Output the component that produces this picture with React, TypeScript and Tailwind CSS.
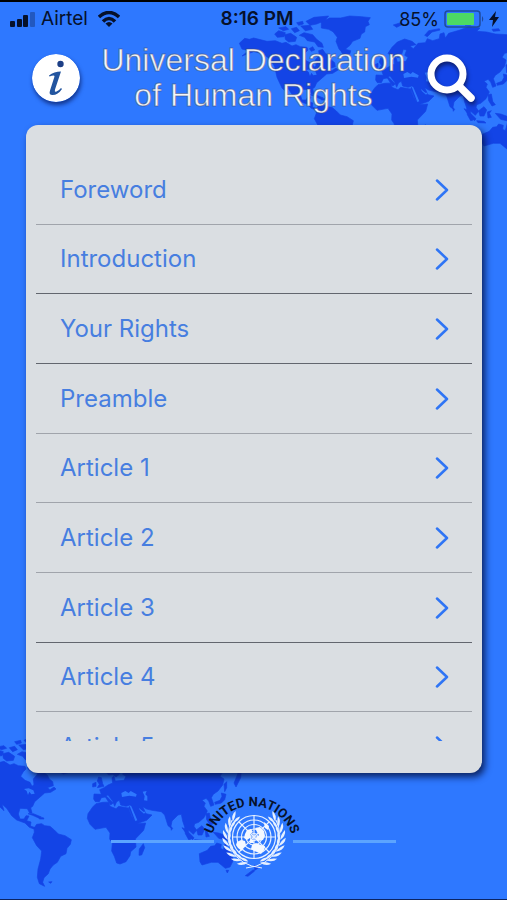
import React from 'react';

interface Section {
    title: string;
    dark?: boolean;
}

const SECTIONS: Section[] = [
    { title: 'Foreword' },
    { title: 'Introduction', dark: true },
    { title: 'Your Rights', dark: true },
    { title: 'Preamble' },
    { title: 'Article 1' },
    { title: 'Article 2' },
    { title: 'Article 3', dark: true },
    { title: 'Article 4' },
    { title: 'Article 5' },
];

const LAND = [
    // North America
    'M-128 130L-112 115L-98 118L-85 114L-45 124L-20 122L0 130L12 127L30 138L42 134L55 140L75 142L78 150L70 158L62 172L75 184L90 190L96 202L102 197L100 180L112 166L110 152L122 148L130 160L142 168L148 180L158 188L160 200L142 206L150 212L162 204L168 210L152 220L134 222L118 236L104 248L98 262L92 266L96 282L89 282L82 269L60 268L55 285L60 300L72 300L78 290L87 291L80 305L93 309L91 321L106 326L102 330L88 325L75 312L50 303L35 290L20 268L6 255L12 275L0 264L-15 232L-22 200L-35 178L-60 160L-85 155L-120 168L-100 152L-120 147Z',
    // Canadian arctic islands
    'M-22 102L-10 92L10 98L6 110L-14 112Z',
    'M8 104L26 100L44 112L40 124L20 126L10 118Z',
    'M-10 84L12 80L20 88L4 92Z',
    'M28 86L44 82L52 92L38 98Z',
    'M52 106L66 98L92 104L104 118L120 130L124 142L108 140L98 126L76 122L68 112Z',
    'M56 78L84 76L92 88L70 92Z',
    'M72 64L96 52L140 48L128 62L104 72L84 76Z',
    'M44 68L62 64L64 72L50 76Z',
    'M82 146L92 140L98 150L88 154Z',
    // Greenland, Iceland
    'M118 66L143 54L176 54L203 48L238 50L265 53L258 64L262 74L250 80L248 96L238 102L234 115L212 124L204 136L193 145L181 158L171 147L162 124L166 112L153 95L140 88L118 84Z',
    'M178 152L190 148L206 152L204 161L190 165L180 160Z',
    // Caribbean
    'M84 284L100 284L124 294L116 297L98 289Z',
    'M118 296L130 296L132 300L118 300Z',
    // South America
    'M110 316L125 314L134 320L150 322L163 333L175 345L195 350L214 362L211 376L201 388L198 404L182 412L172 430L160 438L150 450L145 464L132 476L128 490L134 502L118 494L112 475L114 450L122 420L125 396L110 380L97 356L103 340L102 328Z',
    'M146 489L156 488L152 493Z',
    // Africa
    'M288 254L308 250L326 249L330 262L348 269L356 262L385 267L395 292L410 314L437 312L431 334L406 360L408 384L392 398L390 410L378 428L360 435L350 432L343 412L335 396L337 372L329 360L330 342L318 325L285 331L270 316L262 298L264 284L278 264Z',
    'M430 374L434 386L425 408L417 409L418 390Z',
    // Eurasia
    'M282 225L304 226L299 212L312 206L324 198L338 192L336 176L342 172L346 186L372 184L378 172L368 166L374 150L364 148L358 166L348 174L338 166L326 168L318 160L330 142L346 126L368 117L390 124L402 134L384 138L394 146L408 130L430 128L436 116L452 122L472 116L474 102L486 98L490 114L500 100L534 90L560 80L594 84L584 94L614 96L640 102L676 104L706 110L740 114L762 124L758 136L742 136L746 148L724 156L722 176L708 204L702 192L712 168L716 156L690 154L668 160L660 172L672 180L668 198L654 216L640 226L634 236L642 258L632 262L626 246L618 238L606 244L616 252L612 262L622 276L612 296L596 310L584 314L582 322L590 334L580 346L566 334L562 348L574 360L566 362L556 344L554 324L548 306L544 286L534 288L516 306L512 326L504 320L494 288L484 278L456 274L440 270L428 263L438 284L456 288L440 304L410 314L398 294L386 266L392 258L378 262L362 258L358 244L350 248L344 262L338 246L324 228L318 230L334 246L340 252L332 258L316 234L304 236L298 248L286 248L281 240Z',
    // Nordic and Siberian islands
    'M334 75L356 68L360 74L344 82Z',
    'M428 106L440 92L472 86L474 90L450 96L436 110Z',
    'M544 70L560 66L566 76L550 76Z',
    'M630 88L650 86L654 92L634 94Z',
    // British Isles
    'M292 206L298 196L292 186L296 174L304 176L308 194L312 202Z',
    'M278 194L288 190L288 202L278 204Z',
    // Japan, Sakhalin
    'M664 252L646 256L644 250L660 244L666 232L664 222L678 226L674 242Z',
    'M672 196L680 188L680 206L674 218Z',
    // South-east Asia
    'M546 326L556 330L582 356L578 362L564 350Z',
    'M584 362L606 364L612 369L588 368Z',
    'M590 332L606 320L614 330L606 348L594 348Z',
    'M616 336L628 332L622 340L628 352L618 354Z',
    'M618 284L628 282L632 304L640 314L630 318L620 302Z',
    'M640 340L656 342L678 350L690 364L674 362L656 358Z',
    'M512 322L518 328L514 334Z',
    // Australia, New Zealand
    'M598 404L622 394L632 382L644 380L650 372L664 376L662 388L670 392L676 370L682 390L696 408L700 424L690 444L676 448L664 438L654 430L634 430L606 438L600 428Z',
    'M678 454L686 454L682 462Z',
    'M764 438L776 446L764 454Z',
    'M760 452L764 456L744 472L736 470Z',
];

const SEAS = [
    'M364 222L376 216L386 222L392 216L410 226L408 233L388 230L366 234Z',
    'M428 218L440 216L436 226L442 232L442 245L432 244L434 232Z',
    'M72 210L86 208L100 214L104 224L94 226L88 218L84 228L80 216Z',
    'M388 258L394 262L412 304L406 306Z',
    'M416 266L430 278L438 278L432 284L420 274Z',
];

const WorldMap: React.FC<{ viewBox: string; className: string }> = ({ viewBox, className }) => (
    <svg viewBox={viewBox} className={className} aria-hidden="true">
        <path d={LAND.join('')} fill="#1344e6" stroke="#1344e6" strokeWidth="2" strokeLinejoin="round" />
        <path d={SEAS.join('')} fill="#2e78ff" />
    </svg>
);

const StatusBar: React.FC = () => (
    <div className="relative flex h-9 items-center justify-between border-t-2 border-black pl-[10px] pr-2 text-[19px] text-[#06112b]">
        <div className="flex items-center gap-[6px]">
            <svg viewBox="0 0 25 15" className="h-[15px] w-[25px]" fill="#06112b" aria-hidden="true">
                <rect x="0" y="9" width="5" height="6" rx="1" />
                <rect x="7" y="7" width="5" height="8" rx="1" />
                <rect x="13" y="3" width="5" height="12" rx="1" />
                <rect x="20" y="0" width="5" height="15" rx="1" opacity="0.3" />
            </svg>
            <span>Airtel</span>
            <svg viewBox="0 0 22 16" className="ml-1 h-4 w-[22px]" fill="none" stroke="#06112b" strokeWidth="3.500" aria-hidden="true">
                <path d="M1 6Q11 -3 21 6" />
                <path d="M5 10.500Q11 4.500 17 10.500" />
                <path d="M11 16L7.500 12.500Q11 9.500 14.500 12.500Z" fill="#06112b" stroke="none" />
            </svg>
        </div>
        <span className="absolute inset-x-0 pl-[7px] text-center font-semibold">8:16 PM</span>
        <div className="flex items-center gap-[5px]">
            <span className="text-[18px]">85%</span>
            <svg viewBox="0 0 40 18" className="h-[18px] w-10" aria-hidden="true">
                <rect x="1" y="1" width="35" height="16" rx="3" fill="none" stroke="#1f4a9e" strokeWidth="1.500" />
                <rect x="3" y="3" width="27" height="12" rx="1" fill="#4cd964" />
                <path d="M38 6Q40.500 9 38 12Z" fill="#1f4a9e" />
            </svg>
            <svg viewBox="0 0 10 16" className="h-4 w-[10px]" fill="#06112b" aria-hidden="true">
                <path d="M7 0L0 9H4L3 16L10 6H6Z" />
            </svg>
        </div>
    </div>
);

const Header: React.FC = () => (
    <header className="relative flex h-[89px] items-start justify-between px-8">
        <button type="button" aria-label="Information" className="mt-[18px] cursor-pointer">
            <svg viewBox="0 0 48 48" className="h-12 w-12 rounded-full shadow-[1px_3px_4px_rgba(10,30,100,0.75)]">
                <circle cx="24" cy="24" r="24" fill="#fff" />
                <circle cx="28.500" cy="10" r="3.200" fill="#1d3f86" />
                <path d="M17 21.500Q22 17.500 29 17.500L23 35.500Q22.200 38.500 24.500 37.500Q27 36.500 29 34L30 35Q26 41 20.500 41Q16.500 41 18 36.500L22.500 22.500Q22.700 20.500 17.500 22.500Z" fill="#23559f" />
            </svg>
        </button>
        <h1 className="mt-[7px] text-center font-['Liberation_Sans',Arial,sans-serif] text-[32px] leading-[35px] font-light text-[#f4f6fa] [-webkit-text-stroke:1px_rgba(60,72,110,0.55)]">
            Universal Declaration
            <br />
            of Human Rights
        </h1>
        <button type="button" aria-label="Search" className="mt-[18px] cursor-pointer">
            <svg viewBox="0 0 48 48" className="h-12 w-12 overflow-visible drop-shadow-[1px_3px_2px_rgba(10,20,80,0.8)]" fill="none" stroke="#fff" strokeLinecap="round">
                <circle cx="20" cy="20" r="16" strokeWidth="7" />
                <path d="M32 32L44 44" strokeWidth="7.500" />
            </svg>
        </button>
    </header>
);

const SectionRow: React.FC<{ section: Section }> = ({ section }) => (
    <li
        className={`h-[70px] shrink-0 border-b nth-[3n+2]:h-[69px] ${
            section.dark ? 'border-[#62666e]' : 'border-[#a0a4ab]'
        }`}
    >
        <a href="#" className="flex h-full items-center justify-between pl-6 pr-[23px] text-[24px] text-[#477ee0]">
            <span>{section.title}</span>
            <svg viewBox="0 0 14 22" className="h-[22px] w-[14px]" fill="none" stroke="#2f75f5" strokeWidth="2.500" strokeLinecap="round" strokeLinejoin="round" aria-hidden="true">
                <path d="M2 1.500L12 11L2 20.500" />
            </svg>
        </a>
    </li>
);

const LEAF_ANGLES = [20, 34, 48, 62, 76, 90, 104, 118, 132];

// One half of the olive wreath, starting from the crossed stems
const Branch: React.FC = () => (
    <g>
        <path d="M8 31Q-14 29 -23 12Q-29 -2 -22 -17" fill="none" stroke="#e6f0ff" strokeWidth="1" />
        {LEAF_ANGLES.map((angle) => (
            <g key={angle} transform={`rotate(${angle}) translate(0 26)`} fill="#e6f0ff">
                <path d="M3 0Q-1 6 -7 5Q-3 1 3 0Z" />
                <path d="M3 -1Q-1 -4 -6 -2Q-2 1 3 -1Z" />
            </g>
        ))}
    </g>
);

const Emblem: React.FC = () => (
    <svg viewBox="0 0 79 80" className="h-20 w-[79px] overflow-visible" role="img" aria-label="United Nations">
        <path id="emblem-arc" d="M-4 47A42 42 0 0 1 80 47" fill="none" />
        <text className="font-[Roboto,sans-serif] text-[13px] font-bold" fill="#06112b" textAnchor="middle">
            <textPath href="#emblem-arc" startOffset="50%">UNITED NATIONS</textPath>
        </text>
        <g transform="translate(40 36)">
            <g fill="none" stroke="#e6f0ff" strokeWidth="1.200">
                <circle r="21.500" />
                <circle r="17" />
                <circle r="12.500" />
                <circle r="8" />
                <circle r="3.500" />
                <path d="M0 -21.500V21.500M-21.500 0H21.500M-15 -15L15 15M-15 15L15 -15" />
            </g>
            <g fill="#f4f8ff">
                <path d="M-9 -3L-7 -7L-3 -8L-1 -5L-4 -3L-4 1L-7 3L-10 1Z" />
                <path d="M-17 5L-13 3L-9 4L-8 8L-11 11L-12 14L-16 11L-18 8Z" />
                <path d="M1 -9L6 -10L10 -6L11 -1L9 3L4 4L1 2L5 -2L3 -5Z" />
                <path d="M-2 8L2 6L7 8L11 9L10 13L7 17L3 15L0 14L-3 12Z" />
                <path d="M-4 2L-1 3L0 6L-4 6Z" />
                <path d="M10 -15L15 -11L14 -7L11 -9Z" />
            </g>
            <Branch />
            <g transform="scale(-1 1)">
                <Branch />
            </g>
        </g>
    </svg>
);

const App: React.FC = () => {
    return (
        <div className="relative flex h-screen flex-col overflow-hidden border-b border-[#0b2463] bg-[#2e78ff] font-[Inter,sans-serif]">
            <WorldMap viewBox="-171 0 846 600" className="absolute top-0 right-0 h-[200px] w-[282px]" />
            <WorldMap viewBox="0 0 900 540" className="absolute bottom-0 left-0 h-[180px] w-[300px]" />

            <StatusBar />
            <Header />

            <main className="relative mr-[25px] ml-[26px] flex min-h-0 flex-1 flex-col rounded-xl bg-[#dadee2] px-[10px] pt-[30px] pb-8 shadow-[3px_4px_7px_rgba(5,20,70,0.85)]">
                <ul className="flex min-h-0 flex-1 flex-col overflow-hidden">
                    {SECTIONS.map((section) => (
                        <SectionRow key={section.title} section={section} />
                    ))}
                </ul>
            </main>

            <footer className="relative flex h-[126px] items-center justify-center pt-[10px]">
                <div className="h-[3px] w-[103px] bg-[#5ca4ff]" />
                <Emblem />
                <div className="h-[3px] w-[103px] bg-[#5ca4ff]" />
            </footer>
        </div>
    );
};

export default App;
